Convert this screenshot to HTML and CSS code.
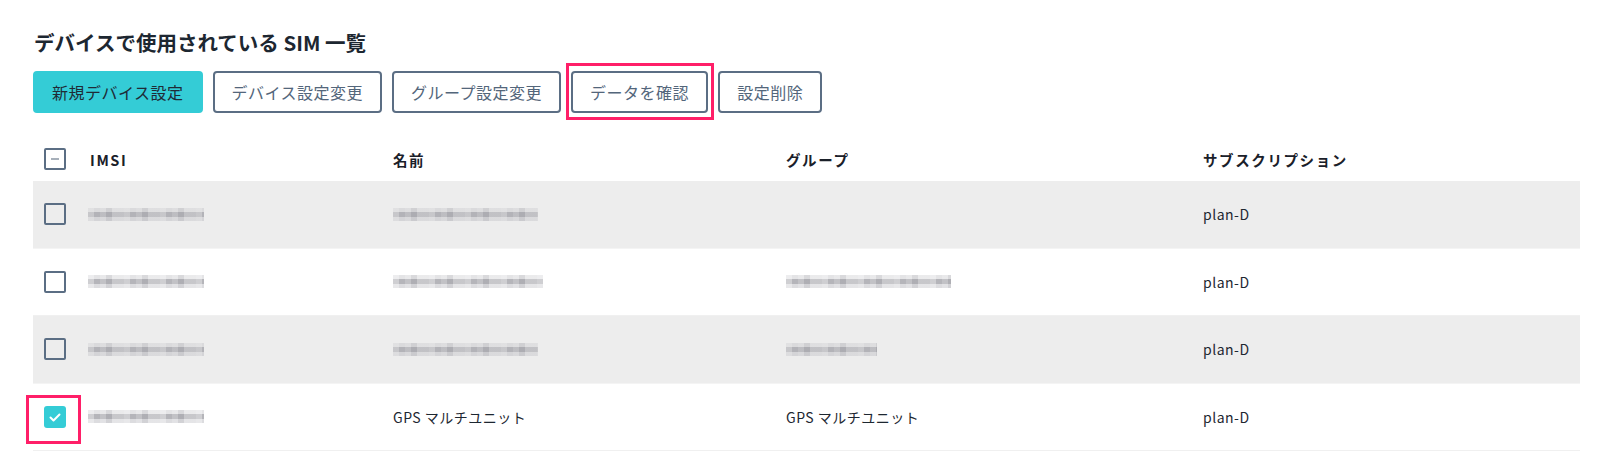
FILE: index.html
```html
<!DOCTYPE html>
<html lang="ja">
<head>
<meta charset="utf-8">
<title>デバイスで使用されている SIM 一覧</title>
<link rel="stylesheet" href="styles.css">
</head>
<body>
<main class="page">
  <h1 class="title">デバイスで使用されている SIM 一覧</h1>
  <div class="toolbar">
    <button class="btn btn-primary">新規デバイス設定</button>
    <button class="btn">デバイス設定変更</button>
    <button class="btn">グループ設定変更</button>
    <span class="highlight-wrap"><button class="btn btn-data">データを確認</button><span class="hl hl-btn"></span></span>
    <button class="btn">設定削除</button>
  </div>

  <div class="table">
    <div class="row head">
      <div class="cell check"><span class="cb cb-partial"><span class="minus"></span></span></div>
      <div class="cell">IMSI</div>
      <div class="cell">名前</div>
      <div class="cell">グループ</div>
      <div class="cell">サブスクリプション</div>
    </div>

    <div class="row alt">
      <div class="cell check"><span class="cb"></span></div>
      <div class="cell"><span class="mosaic w-imsi"></span></div>
      <div class="cell"><span class="mosaic w-name1"></span></div>
      <div class="cell"></div>
      <div class="cell">plan-D</div>
    </div>

    <div class="row">
      <div class="cell check"><span class="cb"></span></div>
      <div class="cell"><span class="mosaic w-imsi"></span></div>
      <div class="cell"><span class="mosaic w-name2"></span></div>
      <div class="cell"><span class="mosaic w-group2"></span></div>
      <div class="cell">plan-D</div>
    </div>

    <div class="row alt">
      <div class="cell check"><span class="cb"></span></div>
      <div class="cell"><span class="mosaic w-imsi"></span></div>
      <div class="cell"><span class="mosaic w-name1"></span></div>
      <div class="cell"><span class="mosaic w-group3"></span></div>
      <div class="cell">plan-D</div>
    </div>

    <div class="row last">
      <div class="cell check">
        <span class="cb cb-checked">
          <svg viewBox="0 0 22 22" width="22" height="22"><polyline points="6.5,11.5 9.5,14.5 15.5,8.5" fill="none" stroke="#ffffff" stroke-width="2" stroke-linecap="round" stroke-linejoin="round"/></svg>
          <span class="hl hl-cb"></span>
        </span>
      </div>
      <div class="cell"><span class="mosaic w-imsi"></span></div>
      <div class="cell">GPS マルチユニット</div>
      <div class="cell">GPS マルチユニット</div>
      <div class="cell">plan-D</div>
    </div>
  </div>
</main>
</body>
</html>
```

FILE: styles.css
```css
* { box-sizing: border-box; }

html, body {
  margin: 0;
  padding: 0;
  background: #ffffff;
}

body {
  font-family: "Noto Sans CJK JP", "Noto Sans", sans-serif;
  color: #1d2731;
}

.page {
  padding: 28px 20px 0 33px;
}

.title {
  margin: 0 0 15px 1px;
  font-size: 20.5px;
  line-height: 28px;
  font-weight: 700;
  color: #1d2731;
}

.toolbar {
  display: flex;
  gap: 10px;
  align-items: center;
  margin-bottom: 24px;
}

.btn {
  height: 42px;
  padding: 0 17px;
  border: 2px solid #5b6e84;
  border-radius: 4px;
  background: #ffffff;
  color: #53667b;
  font-family: "Noto Sans CJK JP", "Noto Sans", sans-serif;
  font-size: 16px;
  letter-spacing: 0.5px;
  line-height: 1;
  cursor: pointer;
}

.btn-primary {
  background: #34ccd6;
  border-color: #34ccd6;
  color: #1f2b36;
}

.highlight-wrap {
  position: relative;
  display: inline-flex;
}

.hl {
  position: absolute;
  border: 3px solid #ff1f68;
  pointer-events: none;
}

.hl-btn {
  top: -8px;
  bottom: -7px;
  left: -5px;
  right: -6px;
}

.table {
  width: 100%;
}

.row {
  display: grid;
  grid-template-columns: 57px 303px 393px 417px 1fr;
  align-items: center;
  height: 67.5px;
  border-bottom: 1px solid #f0f0f0;
  font-size: 14px;
  letter-spacing: 0.5px;
  color: #1d2731;
}

.row.head {
  height: 44px;
  border-bottom: none;
  font-size: 14.5px;
  font-weight: 700;
  letter-spacing: 1.6px;
  color: #1a2029;
}

.row.alt {
  background: #ededed;
  border-bottom-color: #f4f4f4;
}

.cell {
  display: flex;
  align-items: center;
  white-space: nowrap;
}

.cell.check {
  padding-left: 11px;
}

.cb {
  position: relative;
  display: inline-block;
  width: 22px;
  height: 22px;
  border: 2px solid #5b6e84;
  border-radius: 2px;
}

.cb-partial .minus {
  position: absolute;
  left: 5px;
  top: 8px;
  width: 8px;
  height: 2px;
  background: #a7b0ba;
}

.cb-checked {
  border: none;
  border-radius: 3px;
  background: #34ccd6;
}

.cb-checked svg {
  display: block;
}

.hl-cb {
  top: -11px;
  bottom: -16px;
  left: -18px;
  right: -15px;
}

.mosaic {
  display: inline-block;
  height: 13px;
  margin-left: -2px;
  background-image:
    repeating-linear-gradient(90deg,
      rgba(255,255,255,0.35) 0 6px,
      rgba(255,255,255,0) 6px 12px,
      rgba(255,255,255,0.18) 12px 18px,
      rgba(120,120,128,0.10) 18px 24px,
      rgba(255,255,255,0.25) 24px 36px),
    linear-gradient(to bottom,
      #e4e4e6 0 4px,
      #b5b5ba 4px 9px,
      #dcdcdf 9px 13px);
}

.row.alt .mosaic {
  background-image:
    repeating-linear-gradient(90deg,
      rgba(237,237,237,0.35) 0 6px,
      rgba(237,237,237,0) 6px 12px,
      rgba(237,237,237,0.18) 12px 18px,
      rgba(120,120,128,0.10) 18px 24px,
      rgba(237,237,237,0.25) 24px 36px),
    linear-gradient(to bottom,
      #dadadc 0 4px,
      #b3b3b8 4px 9px,
      #d4d4d7 9px 13px);
}

.w-imsi { width: 116px; }
.w-name1 { width: 145px; margin-left: 0; }
.w-name2 { width: 150px; margin-left: 0; }
.w-group2 { width: 165px; margin-left: 0; }
.w-group3 { width: 91px; margin-left: 0; }
```
